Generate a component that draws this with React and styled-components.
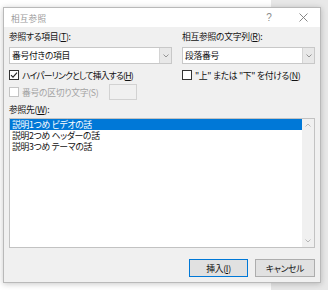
import React from "react";
import styled, { createGlobalStyle } from "styled-components";

const Global = createGlobalStyle`
  html, body { margin: 0; padding: 0; }
  body {
    width: 328px; height: 290px; overflow: hidden;
    background: linear-gradient(to right, #ffffff 0, #ffffff 271px, #e8e8e8 271px);
    font-family: "Noto Sans CJK JP", "Noto Sans", sans-serif;
    font-feature-settings: "palt";
    letter-spacing: -0.3px;
  }
`;

const Desktop = styled.div`
  padding: 7px 0 0 3px;
`;

const Dialog = styled.div`
  width: 318px;
  height: 276px;
  box-sizing: border-box;
  border: 1px solid #b9b9b9;
  background: #f0f0f0;
  box-shadow: 0 1px 6px rgba(0, 0, 0, 0.22);
  display: flex;
  flex-direction: column;
`;

const TitleBar = styled.div`
  height: 19px;
  background: #ffffff;
  display: flex;
  align-items: center;
  padding-left: 7px;
  font-size: 8.6px;
  color: #9a9a9a;
`;

const Title = styled.div`
  flex: 1;
  letter-spacing: 0.2px;
`;

const TitleBtn = styled.div`
  width: ${(p) => p.$w}px;
  display: flex;
  justify-content: center;
  align-items: center;
  color: #8a8a8a;
  font-size: 10px;
  font-family: "Liberation Sans", sans-serif;
`;

const Body = styled.div`
  flex: 1;
  padding: 4px 5px 0 5px;
  display: flex;
  flex-direction: column;
`;

const Columns = styled.div`
  display: grid;
  grid-template-columns: 163px 133px;
  column-gap: 10px;
`;

const Col = styled.div`
  display: flex;
  flex-direction: column;
`;

const Label = styled.div`
  height: 12px;
  line-height: 12px;
  font-size: 8.8px;
  color: #111;
  margin-top: ${(p) => p.$mt || 0}px;
  white-space: nowrap;
`;

const U = styled.span`
  text-decoration: underline;
  text-underline-offset: 1px;
`;

const Combo = styled.div`
  margin-top: 4px;
  height: 17px;
  box-sizing: border-box;
  border: 1px solid #c8c8c8;
  background: #ffffff;
  display: flex;
  align-items: stretch;
`;

const ComboText = styled.div`
  flex: 1;
  font-size: 8.8px;
  line-height: 15px;
  padding-left: 2px;
  color: #111;
`;

const ComboArrow = styled.div`
  width: 11px;
  background: #e8e8e8;
  border-left: 1px solid #d4d4d4;
  display: flex;
  align-items: center;
  justify-content: center;
`;

const CheckRow = styled.div`
  margin-top: ${(p) => p.$mt || 0}px;
  height: ${(p) => p.$h || 12}px;
  display: flex;
  align-items: center;
  gap: 3px;
  font-size: 8.8px;
  letter-spacing: ${(p) => p.$ls ?? -0.3}px;
  color: ${(p) => (p.$disabled ? "#a3a3a3" : "#111")};
  white-space: nowrap;
`;

const Box = styled.div`
  width: 10px;
  height: 10px;
  box-sizing: border-box;
  border: 1px solid ${(p) => (p.$disabled ? "#c4c4c4" : "#333")};
  background: #ffffff;
  display: flex;
  align-items: center;
  justify-content: center;
  flex: none;
`;

const SmallInput = styled.div`
  margin-left: 8px;
  width: 28px;
  height: 16px;
  box-sizing: border-box;
  border: 1px solid #d2d2d2;
  background: #f0f0f0;
`;

const List = styled.div`
  margin-top: 2px;
  height: 130px;
  box-sizing: border-box;
  border: 1px solid #c2c2c2;
  background: #ffffff;
  display: flex;
`;

const Rows = styled.div`
  flex: 1;
`;

const Row = styled.div`
  height: 11px;
  line-height: 11px;
  font-size: 8.8px;
  padding-left: 2px;
  background: ${(p) => (p.$sel ? "#0078d7" : "transparent")};
  color: ${(p) => (p.$sel ? "#ffffff" : "#111")};
  white-space: nowrap;
`;

const Scroll = styled.div`
  width: 12px;
  background: #f0f0f0;
  display: flex;
  flex-direction: column;
  justify-content: space-between;
  align-items: center;
  padding: 4px 0;
`;

const Buttons = styled.div`
  margin-top: 11px;
  display: flex;
  justify-content: flex-end;
  gap: 7px;
`;

const Button = styled.div`
  width: ${(p) => p.$w}px;
  height: 18px;
  box-sizing: border-box;
  border: 1px solid ${(p) => (p.$def ? "#0078d7" : "#adadad")};
  background: #e1e1e1;
  display: flex;
  align-items: center;
  justify-content: center;
  font-size: 8.8px;
  color: #111;
`;

const Chevron = ({ up, color = "#8a8a8a" }) => (
  <svg width="6" height="4" viewBox="0 0 6 4">
    <path
      d={up ? "M0.5 3.5 L3 1 L5.5 3.5" : "M0.5 0.5 L3 3 L5.5 0.5"}
      fill="none"
      stroke={color}
      strokeWidth="0.9"
    />
  </svg>
);

const Check = () => (
  <svg width="8" height="8" viewBox="0 0 8 8">
    <path d="M1 4.2 L3 6.2 L7 1.6" fill="none" stroke="#222" strokeWidth="1.1" />
  </svg>
);

const Close = () => (
  <svg width="9" height="9" viewBox="0 0 9 9">
    <path d="M0.5 0.5 L8.5 8.5 M8.5 0.5 L0.5 8.5" stroke="#7a7a7a" strokeWidth="0.9" />
  </svg>
);

export default function App() {
  return (
    <>
      <Global />
      <Desktop>
        <Dialog>
          <TitleBar>
            <Title>相互参照</Title>
            <TitleBtn $w={34}>?</TitleBtn>
            <TitleBtn $w={34}>
              <Close />
            </TitleBtn>
          </TitleBar>
          <Body>
            <Columns>
              <Col>
                <Label>
                  参照する項目(<U>T</U>):
                </Label>
                <Combo>
                  <ComboText>番号付きの項目</ComboText>
                  <ComboArrow>
                    <Chevron />
                  </ComboArrow>
                </Combo>
                <CheckRow $mt={5} $ls={-0.8}>
                  <Box>
                    <Check />
                  </Box>
                  <span>
                    ハイパーリンクとして挿入する(<U>H</U>)
                  </span>
                </CheckRow>
                <CheckRow $mt={3} $h={16} $disabled>
                  <Box $disabled />
                  <span>番号の区切り文字(S)</span>
                  <SmallInput />
                </CheckRow>
              </Col>
              <Col>
                <Label>
                  相互参照の文字列(<U>R</U>):
                </Label>
                <Combo>
                  <ComboText>段落番号</ComboText>
                  <ComboArrow>
                    <Chevron />
                  </ComboArrow>
                </Combo>
                <CheckRow $mt={5}>
                  <Box />
                  <span>
                    "上" または "下" を付ける(<U>N</U>)
                  </span>
                </CheckRow>
              </Col>
            </Columns>
            <Label $mt={4}>
              参照先(<U>W</U>):
            </Label>
            <List>
              <Rows>
                <Row $sel>説明1つめ ビデオの話</Row>
                <Row>説明2つめ ヘッダーの話</Row>
                <Row>説明3つめ テーマの話</Row>
              </Rows>
              <Scroll>
                <Chevron up color="#b0b0b0" />
                <Chevron color="#b0b0b0" />
              </Scroll>
            </List>
            <Buttons>
              <Button $def $w={59}>
                挿入(<U>I</U>)
              </Button>
              <Button $w={60}>キャンセル</Button>
            </Buttons>
          </Body>
        </Dialog>
      </Desktop>
    </>
  );
}
